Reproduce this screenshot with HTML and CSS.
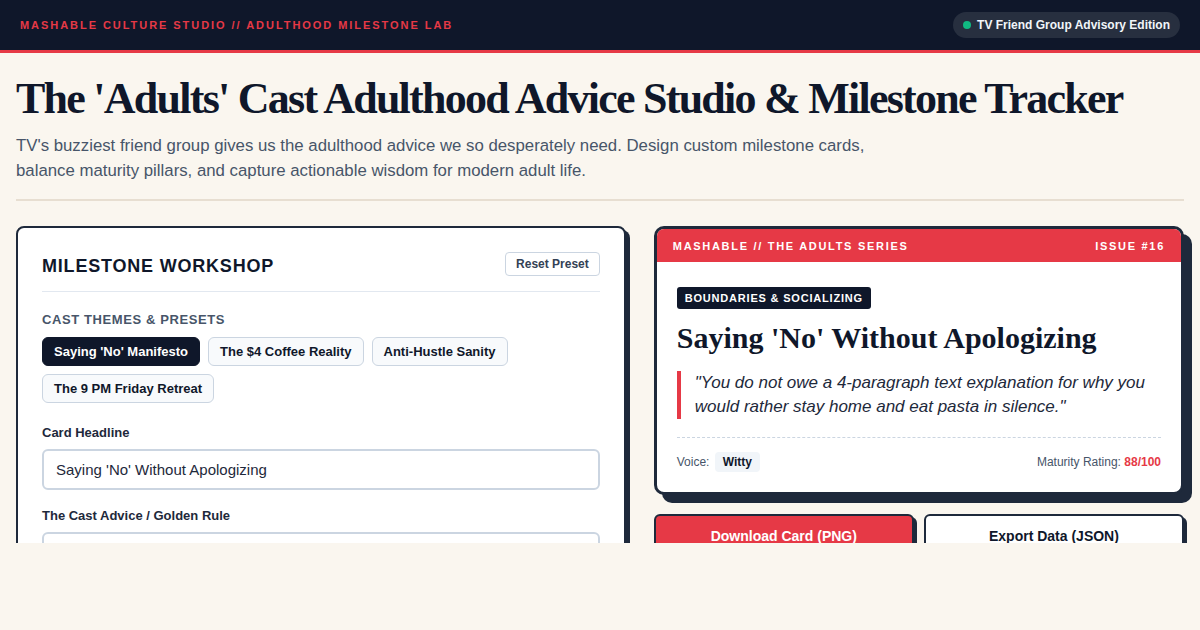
FILE: index.html
```html
<!DOCTYPE html>
<html lang="en">
<head>
    <meta charset="UTF-8">
    <meta name="viewport" content="width=device-width, initial-scale=1.0">
    <title>Adulthood Milestone Lab</title>
    <link rel="stylesheet" href="styles.css">
</head>
<body>
    <div class="app">
        <header class="topbar">
            <div class="brand">Mashable Culture Studio // Adulthood Milestone Lab</div>
            <div class="edition"><span class="dot"></span>TV Friend Group Advisory Edition</div>
        </header>

        <main class="page">
            <section class="intro">
                <h1>The 'Adults' Cast Adulthood Advice Studio &amp; Milestone Tracker</h1>
                <p>TV's buzziest friend group gives us the adulthood advice we so desperately need. Design custom milestone cards, balance maturity pillars, and capture actionable wisdom for modern adult life.</p>
            </section>

            <div class="columns">
                <section class="workshop">
                    <div class="workshop-head">
                        <h2>Milestone Workshop</h2>
                        <button class="btn-small">Reset Preset</button>
                    </div>

                    <div class="group-label">Cast Themes &amp; Presets</div>
                    <div class="chips">
                        <button class="chip active">Saying 'No' Manifesto</button>
                        <button class="chip">The $4 Coffee Reality</button>
                        <button class="chip">Anti-Hustle Sanity</button>
                        <button class="chip">The 9 PM Friday Retreat</button>
                    </div>

                    <div class="field">
                        <label for="headline">Card Headline</label>
                        <input type="text" id="headline" value="Saying 'No' Without Apologizing">
                    </div>
                    <div class="field">
                        <label for="advice">The Cast Advice / Golden Rule</label>
                        <textarea id="advice" rows="3">You do not owe a 4-paragraph text explanation for why you would rather stay home and eat pasta in silence.</textarea>
                    </div>
                </section>

                <section class="preview">
                    <div class="card">
                        <div class="card-top">
                            <span>Mashable // The Adults Series</span>
                            <span>Issue #16</span>
                        </div>
                        <div class="card-body">
                            <span class="tag">Boundaries &amp; Socializing</span>
                            <h3>Saying 'No' Without Apologizing</h3>
                            <blockquote>"You do not owe a 4-paragraph text explanation for why you would rather stay home and eat pasta in silence."</blockquote>
                            <div class="card-foot">
                                <div>Voice: <span class="voice">Witty</span></div>
                                <div>Maturity Rating: <span class="rating">88/100</span></div>
                            </div>
                        </div>
                    </div>
                    <div class="actions">
                        <button class="btn primary">Download Card (PNG)</button>
                        <button class="btn">Export Data (JSON)</button>
                    </div>
                </section>
            </div>
        </main>
    </div>
</body>
</html>
```

FILE: styles.css
```css
body {
    margin: 0;
    background: #faf6ef;
    font-family: "Liberation Sans", Arial, sans-serif;
    color: #0f172a;
}
.app {
    height: 543px;
    overflow: hidden;
}
.topbar {
    height: 50px;
    background: #0f172a;
    border-bottom: 3px solid #e63946;
    display: flex;
    align-items: center;
    justify-content: space-between;
    padding: 0 20px;
}
.brand {
    color: #e63946;
    font-size: 11px;
    font-weight: bold;
    letter-spacing: 1.95px;
    text-transform: uppercase;
}
.edition {
    display: flex;
    align-items: center;
    gap: 6px;
    background: #272f3f;
    color: #f1f5f9;
    font-size: 12px;
    font-weight: bold;
    height: 26px;
    padding: 0 10px;
    border-radius: 13px;
}
.dot {
    width: 8px;
    height: 8px;
    border-radius: 50%;
    background: #10b981;
}
.page {
    padding: 0 16px;
}
.intro {
    padding: 21px 0 16px;
    border-bottom: 2px solid #e7ded1;
    margin-bottom: 25px;
}
.intro h1 {
    margin: 0;
    font-family: "Liberation Serif", "Times New Roman", serif;
    font-size: 44px;
    letter-spacing: -1.75px;
    line-height: 50px;
    color: #0f172a;
    white-space: nowrap;
}
.intro p {
    margin: 9px 0 0;
    max-width: 880px;
    font-size: 16.8px;
    line-height: 25px;
    color: #475569;
}
.columns {
    display: grid;
    grid-template-columns: 1.15fr 1fr;
    gap: 28px;
}
.workshop {
    background: #fff;
    border: 2px solid #1e293b;
    border-radius: 8px;
    box-shadow: 4px 4px 0 #1e293b;
    padding: 24px;
}
.workshop-head {
    display: flex;
    justify-content: space-between;
    align-items: flex-start;
    padding-bottom: 14px;
    border-bottom: 1px solid #e2e8f0;
    margin-bottom: 20px;
}
.workshop-head h2 {
    margin: 4px 0 0;
    font-size: 18px;
    letter-spacing: 0.8px;
    text-transform: uppercase;
    color: #0f172a;
}
.btn-small {
    font-family: inherit;
    font-size: 12px;
    font-weight: bold;
    color: #334155;
    background: #fff;
    border: 1px solid #cbd5e1;
    border-radius: 4px;
    height: 24px;
    padding: 0 10px;
}
.group-label {
    font-size: 13px;
    font-weight: bold;
    color: #475569;
    letter-spacing: 0.6px;
    text-transform: uppercase;
    margin-bottom: 10px;
}
.chips {
    display: flex;
    flex-wrap: wrap;
    gap: 8px;
    margin-bottom: 22px;
}
.chip {
    font-family: inherit;
    font-size: 13px;
    font-weight: bold;
    color: #0f172a;
    background: #f8fafc;
    border: 1px solid #cbd5e1;
    border-radius: 6px;
    height: 29px;
    padding: 0 11px;
}
.chip.active {
    background: #0f172a;
    border-color: #0f172a;
    color: #fff;
}
.field {
    margin-bottom: 18px;
}
.field label {
    display: block;
    font-size: 13px;
    font-weight: bold;
    color: #1e293b;
    margin-bottom: 9px;
}
.field input,
.field textarea {
    box-sizing: border-box;
    width: 100%;
    font-family: inherit;
    font-size: 15px;
    color: #1e293b;
    border: 2px solid #cbd5e1;
    border-radius: 6px;
    padding: 10px 12px;
    background: #fff;
}
.field input {
    height: 41px;
}
.field textarea {
    resize: none;
    line-height: 22px;
}
.card {
    background: #fff;
    border: 3px solid #1e293b;
    border-radius: 10px;
    box-shadow: 8px 8px 0 #1e293b;
    overflow: hidden;
}
.card-top {
    display: flex;
    justify-content: space-between;
    align-items: center;
    height: 33px;
    padding: 0 16px;
    background: #e63946;
    color: #fff;
    font-size: 11px;
    font-weight: bold;
    letter-spacing: 1.7px;
    text-transform: uppercase;
}
.card-body {
    padding: 25px 20px 20px;
}
.tag {
    display: inline-block;
    background: #0f172a;
    color: #fff;
    font-size: 11px;
    font-weight: bold;
    letter-spacing: 0.8px;
    text-transform: uppercase;
    padding: 5px 8px;
    border-radius: 3px;
}
.card-body h3 {
    margin: 10px 0 14px;
    font-family: "Liberation Serif", "Times New Roman", serif;
    font-size: 30px;
    line-height: 38px;
    color: #0f172a;
}
.card-body blockquote {
    margin: 0;
    border-left: 4px solid #e63946;
    padding: 0 0 0 14px;
    font-size: 17px;
    line-height: 24px;
    font-style: italic;
    color: #1e293b;
}
.card-foot {
    display: flex;
    justify-content: space-between;
    align-items: center;
    margin-top: 18px;
    padding-top: 14px;
    border-top: 1px dashed #cbd5e1;
    font-size: 12px;
    color: #475569;
}
.voice {
    display: inline-block;
    background: #f1f5f9;
    color: #0f172a;
    font-weight: bold;
    padding: 3px 8px;
    border-radius: 4px;
    margin-left: 2px;
}
.rating {
    color: #e63946;
    font-weight: bold;
}
.actions {
    display: grid;
    grid-template-columns: 1fr 1fr;
    gap: 10px;
    margin-top: 19px;
}
.btn {
    font-family: inherit;
    font-size: 14px;
    font-weight: bold;
    height: 44px;
    border: 2px solid #1e293b;
    border-radius: 6px;
    box-shadow: 3px 3px 0 #1e293b;
    background: #fff;
    color: #0f172a;
}
.btn.primary {
    background: #e63946;
    color: #fff;
}
```
